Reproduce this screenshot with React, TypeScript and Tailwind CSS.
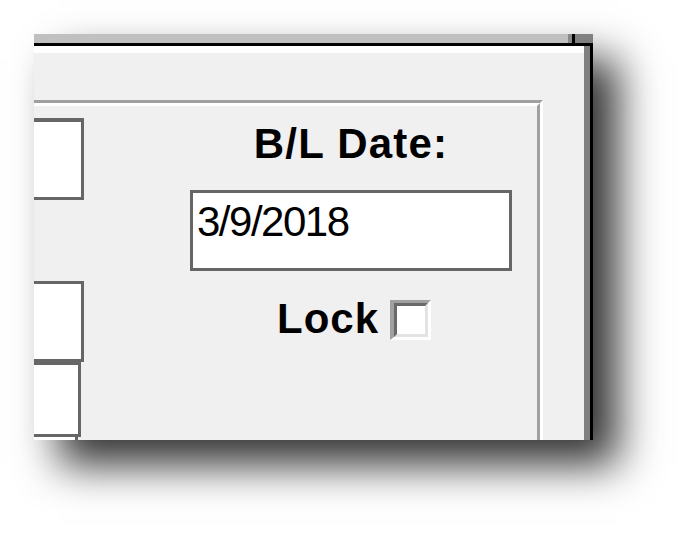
export default function App() {
  return (
    <div className="min-h-screen bg-white pt-[34px] pl-[34px] font-['Liberation_Sans',Arial,sans-serif] text-black">
      <div className="w-[559px] h-[406px] flex flex-col overflow-hidden bg-[#f0f0f0] shadow-[25px_25px_40px_rgba(0,0,0,0.8)]">
        {/* Title strip */}
        <div className="flex h-[9px] shrink-0">
          <div className="flex-1 bg-[#c0c0c0]" />
          <div className="w-[4px] bg-[#8a8a8a]" />
          <div className="w-[3px] bg-black" />
          <div className="w-[18px] bg-[#808080]" />
        </div>
        <div className="h-[3px] shrink-0 bg-black" />

        <div className="flex flex-1 min-h-0">
          <div className="flex-1 flex flex-col min-w-0">
            <div className="h-[7px] shrink-0 bg-white" />
            <div className="flex-1 min-h-0 pt-[47px]">
              {/* Group box */}
              <div className="w-[509px] h-full border-t-[3px] border-r-[3px] border-t-[#a0a0a0] border-r-white">
                <div className="h-full flex items-start border-t-[3px] border-r-[3px] border-t-white border-r-[#a0a0a0]">
                  {/* Left text boxes (cut off) */}
                  <div className="w-[50px] shrink-0 flex flex-col pt-[12px]">
                    <div className="h-[82px] bg-white border-t-[4px] border-r-[3px] border-b-[3px] border-[#666666]" />
                    <div className="mt-[81px] h-[81px] bg-white border-t-[3px] border-r-[3px] border-b-[3px] border-[#666666]" />
                    <div className="w-[47px] h-[75px] bg-white border-t-[3px] border-r-[3px] border-b-[3px] border-[#666666]" />
                    <div className="w-[44px] h-[20px] bg-white border-r-[3px] border-[#666666]" />
                  </div>

                  {/* B/L Date */}
                  <div className="ml-[106px] w-[322px] shrink-0 flex flex-col items-center pt-[17px]">
                    <div className="text-[42px] leading-none font-bold tracking-[1.2px]">B/L Date:</div>
                    <div className="mt-[25px] w-full h-[81px] bg-white border-[3px] border-[#666666] pl-[4px] pt-[8px] text-[42px] leading-none tracking-[-1.5px]">
                      3/9/2018
                    </div>
                    <div className="mt-[27px] ml-[6px] flex items-end gap-[11px]">
                      <span className="text-[42px] leading-none font-bold tracking-[1px]">Lock</span>
                      <div className="w-[41px] h-[40px] flex border-[3px] border-l-[4px] border-t-[#a0a0a0] border-l-[#a0a0a0] border-b-white border-r-white">
                        <div className="flex-1 bg-white border-[3px] border-t-[#696969] border-l-[#696969] border-b-[#e3e3e3] border-r-[#e3e3e3]" />
                      </div>
                    </div>
                  </div>
                </div>
              </div>
            </div>
          </div>
          <div className="w-[6px] shrink-0 bg-[#808080]" />
          <div className="w-[3px] shrink-0 bg-black" />
        </div>
      </div>
    </div>
  );
}
